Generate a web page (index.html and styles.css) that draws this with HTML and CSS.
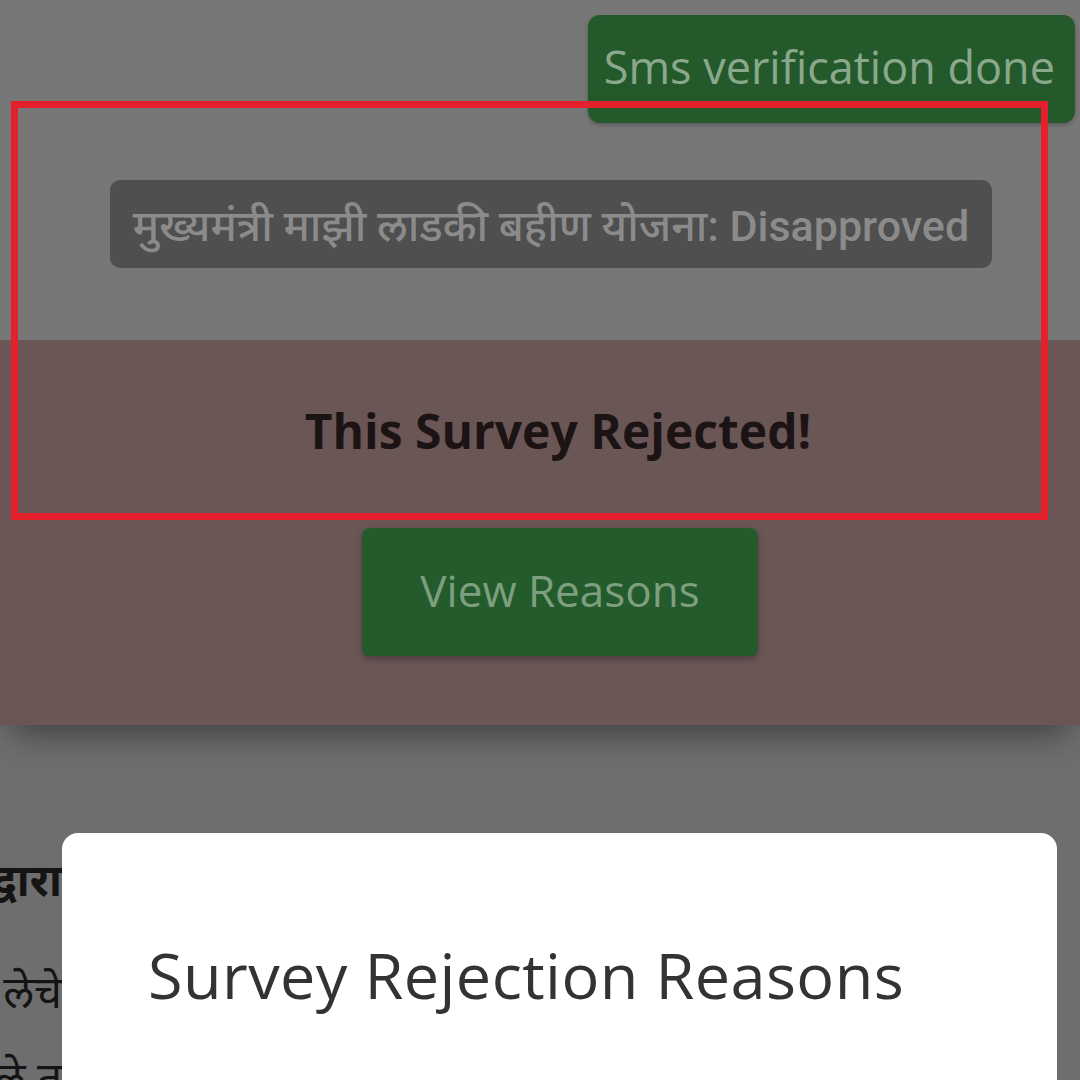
FILE: index.html
```html
<!DOCTYPE html>
<html lang="mr">
<head>
<meta charset="utf-8">
<title>Survey Rejected</title>
<link rel="stylesheet" href="styles.css">
</head>
<body>
<div class="page">
  <section class="top">
    <div class="badge-row">
      <div class="sms-badge">Sms verification done</div>
    </div>
    <div class="status-pill">मुख्यमंत्री माझी लाडकी बहीण योजना: Disapproved</div>
  </section>
  <section class="band">
    <h2 class="rejected">This Survey Rejected!</h2>
    <button class="view-btn">View Reasons</button>
  </section>
  <section class="lower">
    <div class="behind">
      <div class="behind-head">द्वारा</div>
      <div class="behind-line">लेचे</div>
      <div class="behind-line">ले त</div>
    </div>
    <div class="modal">
      <h1 class="modal-title">Survey Rejection Reasons</h1>
    </div>
  </section>
  <div class="highlight"></div>
</div>
</body>
</html>
```
FILE: styles.css
```css
* { box-sizing: border-box; }
html, body { margin: 0; padding: 0; }
body {
  width: 1080px;
  height: 1080px;
  overflow: hidden;
  background: #6e6e6e;
  font-family: "Open Sans", "Noto Sans", sans-serif;
}
.page {
  position: relative;
  width: 1080px;
  height: 1080px;
  overflow: hidden;
  display: flex;
  flex-direction: column;
}
.top {
  flex-shrink: 0;
  height: 340px;
  background: #777777;
  padding-top: 15px;
  display: flex;
  flex-direction: column;
}
.badge-row {
  display: flex;
  justify-content: flex-end;
  padding-right: 5px;
}
.sms-badge {
  width: 487px;
  height: 108px;
  background: #245a2b;
  color: #8aa88b;
  border-radius: 12px;
  font-size: 45px;
  display: flex;
  align-items: center;
  justify-content: flex-end;
  padding-right: 20px;
  padding-bottom: 6px;
  white-space: nowrap;
  box-shadow: 0 2px 4px rgba(0,0,0,0.25);
}
.status-pill {
  margin-top: 57px;
  margin-left: 110px;
  width: 882px;
  height: 88px;
  background: #4f4f4f;
  color: #8b8b8b;
  border-radius: 10px;
  font-family: "Roboto", "Noto Sans", sans-serif;
  font-weight: 500;
  font-size: 43px;
  display: flex;
  align-items: center;
  justify-content: center;
  white-space: nowrap;
}
.band {
  flex-shrink: 0;
  height: 385px;
  background: #6b5656;
  display: flex;
  flex-direction: column;
  align-items: center;
  box-shadow: 0 22px 30px -12px rgba(0,0,0,0.4);
  position: relative;
  z-index: 1;
}
.rejected {
  margin: 60px 0 0 36px;
  font-size: 48px;
  font-weight: 700;
  color: #1c1414;
  line-height: 62px;
  white-space: nowrap;
}
.view-btn {
  margin: 66px 0 0 40px;
  width: 396px;
  height: 128px;
  background: #245b2c;
  color: #7d9f7f;
  border: none;
  border-radius: 8px;
  font-family: "Open Sans", "Noto Sans", sans-serif;
  font-size: 44px;
  box-shadow: 0 3px 6px rgba(0,0,0,0.3);
  padding: 0 0 4px 0;
  white-space: nowrap;
}
.lower {
  flex: 1;
  min-height: 0;
  background: #6e6e6e;
  display: flex;
  padding-top: 108px;
}
.behind {
  width: 62px;
  overflow: hidden;
  display: flex;
  flex-direction: column;
  align-items: flex-end;
  font-family: "Noto Sans", sans-serif;
  color: #141414;
  white-space: nowrap;
}
.behind-head {
  font-size: 44px;
  font-weight: 700;
  line-height: 60px;
  margin-top: 16px;
}
.behind-line {
  font-size: 44px;
  line-height: 60px;
  margin-top: 52px;
}
.behind-line + .behind-line { margin-top: 26px; }
.modal {
  width: 995px;
  background: #ffffff;
  border-radius: 16px 16px 0 0;
  padding: 102px 0 0 86px;
}
.modal-title {
  margin: 0;
  font-size: 63px;
  font-weight: 400;
  letter-spacing: 0.4px;
  color: #333333;
  line-height: 80px;
  white-space: nowrap;
}
.highlight {
  position: absolute;
  left: 11px;
  top: 101px;
  width: 1037px;
  height: 419px;
  border: 7px solid #e3202b;
  z-index: 5;
  pointer-events: none;
}
```
